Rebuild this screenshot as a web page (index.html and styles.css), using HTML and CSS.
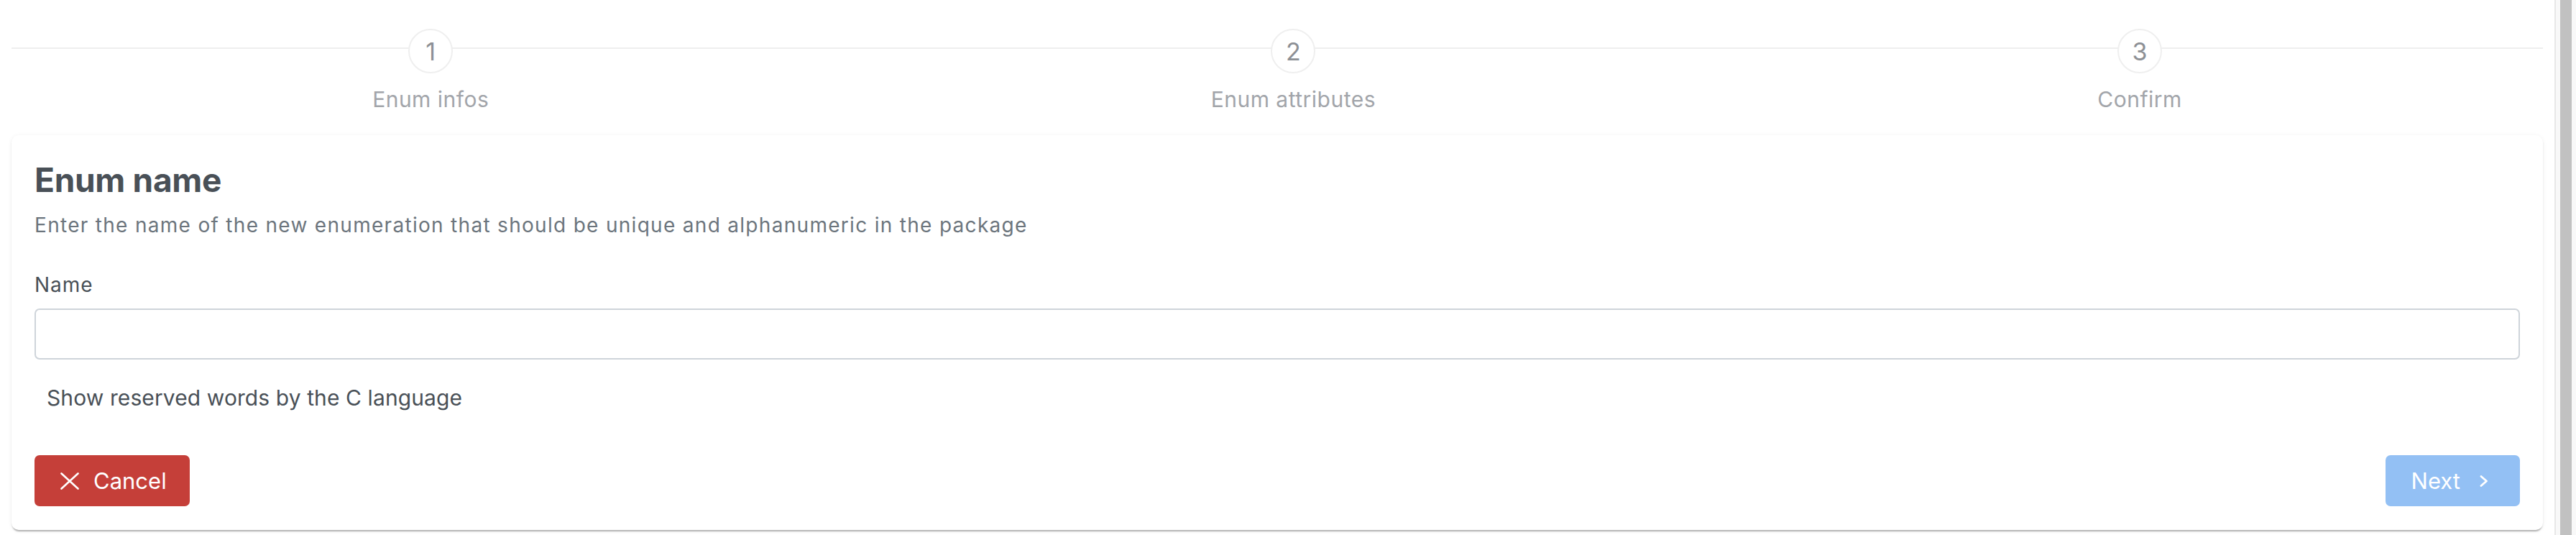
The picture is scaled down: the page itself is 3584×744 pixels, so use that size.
FILE: index.html
```html
<!DOCTYPE html>
<html lang="en">
<head>
<meta charset="utf-8">
<title>New enumeration</title>
<link rel="stylesheet" href="styles.css">
</head>
<body>
<div class="page">
  <nav class="steps">
    <ol class="steps-list">
      <li class="step">
        <span class="step-link">
          <span class="step-number">1</span>
          <span class="step-title">Enum infos</span>
        </span>
      </li>
      <li class="step">
        <span class="step-link">
          <span class="step-number">2</span>
          <span class="step-title">Enum attributes</span>
        </span>
      </li>
      <li class="step">
        <span class="step-link">
          <span class="step-number">3</span>
          <span class="step-title">Confirm</span>
        </span>
      </li>
    </ol>
  </nav>

  <section class="card">
    <h2 class="card-title">Enum name</h2>
    <p class="card-subtitle">Enter the name of the new enumeration that should be unique and alphanumeric in the package</p>
    <label class="field-label" for="enum-name">Name</label>
    <input id="enum-name" class="text-input" type="text">
    <button class="link-button" type="button">Show reserved words by the C language</button>
    <div class="actions">
      <button class="btn btn-danger" type="button">
        <svg class="btn-icon icon-times" viewBox="0 0 26 24" aria-hidden="true"><path d="M1.5 1.5 L24.5 22.5 M24.5 1.5 L1.5 22.5"/></svg>
        <span class="btn-label">Cancel</span>
      </button>
      <button class="btn btn-primary" type="button" disabled>
        <span class="btn-label">Next</span>
        <svg class="btn-icon icon-chevron" viewBox="0 0 12 16" aria-hidden="true"><path d="M2 1.5 L9.5 8 L2 14.5"/></svg>
      </button>
    </div>
  </section>
</div>
<div class="scrollbar"><div class="scrollbar-thumb"></div></div>
</body>
</html>
```

FILE: styles.css
```css
html, body {
  margin: 0;
  height: 100%;
}

body {
  display: flex;
  background: #ffffff;
  font-family: Inter, "Noto Sans", "Liberation Sans", sans-serif;
  color: #495057;
  overflow: hidden;
}

.page {
  flex: 1;
  min-width: 0;
  padding: 0 16px;
}

/* ---------- Steps ---------- */
.steps {
  padding-top: 40px;
}

.steps-list {
  display: flex;
  margin: 0;
  padding: 0;
  list-style: none;
}

.step {
  flex: 1 1 auto;
  position: relative;
  display: flex;
  justify-content: center;
}

.step::before {
  content: "";
  position: absolute;
  left: 0;
  right: 0;
  top: 26px;
  border-top: 2px solid #eeeeee;
}

.step-link {
  position: relative;
  display: flex;
  flex-direction: column;
  align-items: center;
}

.step-number {
  box-sizing: border-box;
  width: 62px;
  height: 62px;
  border: 2px solid #efefef;
  border-radius: 50%;
  background: #ffffff;
  display: flex;
  align-items: center;
  justify-content: center;
  font-size: 34px;
  color: #8d9095;
}

.step-title {
  margin-top: 18px;
  font-size: 30px;
  line-height: 36px;
  letter-spacing: 0.5px;
  color: #a2a5aa;
  white-space: nowrap;
}

/* ---------- Card ---------- */
.card {
  margin-top: 32px;
  padding: 33px 32px 33px;
  background: #ffffff;
  border-radius: 10px;
  box-shadow: 0 4px 2px -2px rgba(0, 0, 0, 0.2), 0 2px 2px 0 rgba(0, 0, 0, 0.1), 0 1px 6px 0 rgba(0, 0, 0, 0.06);
  display: flex;
  flex-direction: column;
  align-items: flex-start;
}

.card-title {
  margin: 0;
  font-size: 46px;
  line-height: 58px;
  letter-spacing: -0.3px;
  font-weight: 700;
  color: #495057;
}

.card-subtitle {
  margin: 14px 0 0;
  font-size: 28px;
  line-height: 40px;
  letter-spacing: 1.3px;
  color: #6c757d;
}

.field-label {
  margin-top: 43px;
  font-size: 28px;
  line-height: 40px;
  letter-spacing: 1px;
  color: #495057;
}

.text-input {
  box-sizing: border-box;
  align-self: stretch;
  margin-top: 13px;
  height: 71px;
  border: 2px solid #ced4da;
  border-radius: 7px;
  background: #ffffff;
  font-family: inherit;
  font-size: 28px;
  padding: 0 20px;
  outline: none;
}

.link-button {
  margin-top: 33px;
  padding: 0 17px;
  border: 0;
  background: transparent;
  font-family: inherit;
  font-size: 30px;
  line-height: 40px;
  letter-spacing: 0.1px;
  color: #495057;
  cursor: pointer;
}

.actions {
  align-self: stretch;
  margin-top: 60px;
  display: flex;
  justify-content: space-between;
}

.btn {
  box-sizing: border-box;
  height: 71px;
  display: flex;
  align-items: center;
  border: 0;
  border-radius: 7px;
  font-family: inherit;
  font-size: 31px;
  color: #ffffff;
  cursor: pointer;
}

.btn-danger {
  padding: 0 32px 0 36px;
  gap: 20px;
  background: #c53f39;
}

.btn-primary {
  padding: 0 44px 0 36px;
  gap: 27px;
  background: #93c0f4;
  cursor: default;
}

.btn-icon {
  fill: none;
  stroke: #ffffff;
  stroke-linecap: round;
  stroke-linejoin: round;
}

.icon-times {
  width: 26px;
  height: 24px;
  stroke-width: 2.6;
}

.icon-chevron {
  width: 12px;
  height: 16px;
  stroke-width: 2.8;
}

/* ---------- Scrollbar strip ---------- */
.scrollbar {
  box-sizing: border-box;
  width: 30px;
  flex: none;
  padding: 0 6px;
  background: #f8f8f8;
  border-left: 2px solid #e7e7e7;
}

.scrollbar-thumb {
  height: 100%;
  background: #c1c1c1;
}
```
